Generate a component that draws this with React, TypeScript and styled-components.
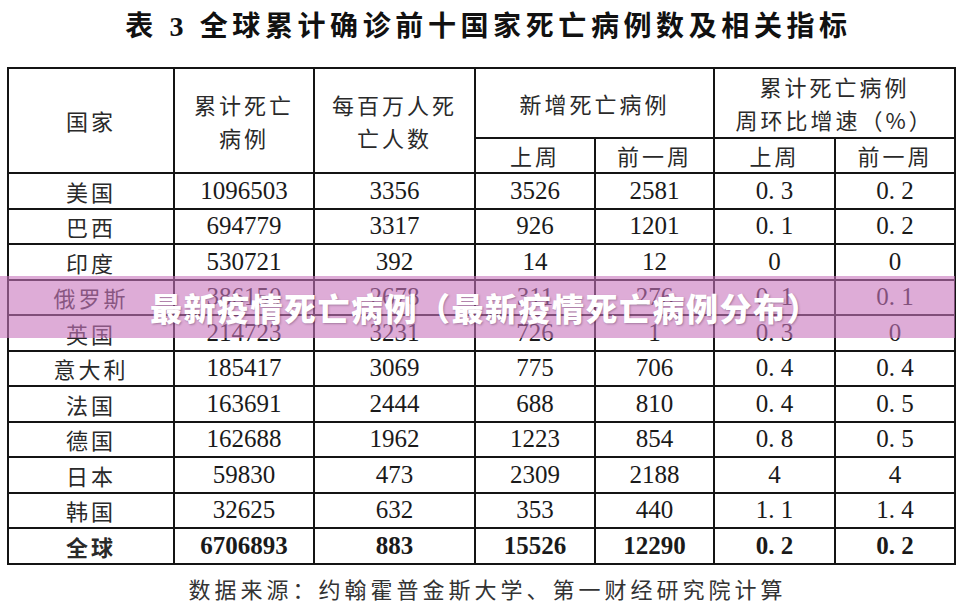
import React from "react";
import styled, { createGlobalStyle } from "styled-components";

const Global = createGlobalStyle`
  html, body { margin: 0; padding: 0; background: #fff; }
  body { width: 962px; height: 614px; overflow: hidden; font-family: "Liberation Serif", "Noto Sans CJK SC", serif; }
`;

const Page = styled.div`
  position: relative;
  width: 962px;
  height: 614px;
  box-sizing: border-box;
  padding-left: 7px;
  display: flex;
  flex-direction: column;
`;

const Title = styled.h1`
  margin: 0;
  width: 947px;
  height: 67px;
  box-sizing: border-box;
  padding: 0 0 14px 16px;
  display: flex;
  align-items: center;
  justify-content: center;
  font: 700 28px/1 "Liberation Serif", "Noto Sans CJK SC", serif;
  letter-spacing: 4.6px;
  color: #111;
  white-space: pre;
`;

const Table = styled.table`
  border-collapse: collapse;
  table-layout: fixed;
  width: 947px;
  color: #1c1c1c;
`;

const Row = styled.tr<{ $h: number }>`
  height: ${(p) => p.$h}px;
`;

const Head = styled.th`
  border: 2px solid #141414;
  padding: 0;
  font: 400 22px/33px "Noto Sans CJK SC", sans-serif;
  letter-spacing: 3px;
  color: #2a2a2a;
  text-align: center;
  vertical-align: middle;
`;

const Cell = styled.td<{ $cn?: boolean; $bold?: boolean }>`
  border: 2px solid #141414;
  padding: 0;
  text-align: center;
  vertical-align: middle;
  white-space: pre;
  font-weight: ${(p) => (p.$bold ? 700 : 400)};
  font-family: ${(p) => (p.$cn ? '"Noto Sans CJK SC", sans-serif' : '"Liberation Serif", serif')};
  font-size: ${(p) => (p.$cn ? 22 : 25)}px;
  letter-spacing: ${(p) => (p.$cn ? 3 : 0)}px;
  line-height: 30px;
  color: ${(p) => (p.$cn ? "#2a2a2a" : "#1a1a1a")};
`;

const Footer = styled.div`
  width: 947px;
  flex: 1;
  box-sizing: border-box;
  padding: 0 0 2px 14px;
  display: flex;
  align-items: center;
  justify-content: center;
  font: 400 22px/1 "Noto Sans CJK SC", sans-serif;
  letter-spacing: 4px;
  color: #333;
`;

const Banner = styled.div`
  position: absolute;
  left: 0;
  top: 276px;
  width: 955px;
  height: 62px;
  box-sizing: border-box;
  padding-left: 150px;
  display: flex;
  align-items: center;
  background: rgba(200, 117, 188, 0.6);
  font: 900 32px/1 "Noto Sans CJK SC", sans-serif;
  letter-spacing: 1.5px;
  color: #fff;
  text-shadow: 1px 1px 2px rgba(60, 30, 60, 0.35);
`;

const widths = [166, 140, 161, 120, 119, 121, 120];

const rows: string[][] = [
  ["美国", "1096503", "3356", "3526", "2581", "0. 3", "0. 2"],
  ["巴西", "694779", "3317", "926", "1201", "0. 1", "0. 2"],
  ["印度", "530721", "392", "14", "12", "0", "0"],
  ["俄罗斯", "386150", "2678", "311", "276", "0. 1", "0. 1"],
  ["英国", "214723", "3231", "726", "1", "0. 3", "0"],
  ["意大利", "185417", "3069", "775", "706", "0. 4", "0. 4"],
  ["法国", "163691", "2444", "688", "810", "0. 4", "0. 5"],
  ["德国", "162688", "1962", "1223", "854", "0. 8", "0. 5"],
  ["日本", "59830", "473", "2309", "2188", "4", "4"],
  ["韩国", "32625", "632", "353", "440", "1. 1", "1. 4"],
];

const total = ["全球", "6706893", "883", "15526", "12290", "0. 2", "0. 2"];

export default function App() {
  return (
    <>
      <Global />
      <Page>
        <Title>表 3 全球累计确诊前十国家死亡病例数及相关指标</Title>
        <Table>
          <colgroup>
            {widths.map((w, i) => (
              <col key={i} style={{ width: w }} />
            ))}
          </colgroup>
          <thead>
            <Row $h={70}>
              <Head rowSpan={2}>国家</Head>
              <Head rowSpan={2}>
                累计死亡
                <br />
                病例
              </Head>
              <Head rowSpan={2}>
                每百万人死
                <br />
                亡人数
              </Head>
              <Head colSpan={2}>新增死亡病例</Head>
              <Head colSpan={2}>
                累计死亡病例
                <br />
                周环比增速（%）
              </Head>
            </Row>
            <Row $h={35}>
              <Head>上周</Head>
              <Head>前一周</Head>
              <Head>上周</Head>
              <Head>前一周</Head>
            </Row>
          </thead>
          <tbody>
            {rows.map((r) => (
              <Row $h={35.5} key={r[0]}>
                {r.map((v, i) => (
                  <Cell key={i} $cn={i === 0}>
                    {v}
                  </Cell>
                ))}
              </Row>
            ))}
            <Row $h={35.5}>
              {total.map((v, i) => (
                <Cell key={i} $cn={i === 0} $bold>
                  {v}
                </Cell>
              ))}
            </Row>
          </tbody>
        </Table>
        <Footer>数据来源：约翰霍普金斯大学、第一财经研究院计算</Footer>
        <Banner>最新疫情死亡病例（最新疫情死亡病例分布）</Banner>
      </Page>
    </>
  );
}
